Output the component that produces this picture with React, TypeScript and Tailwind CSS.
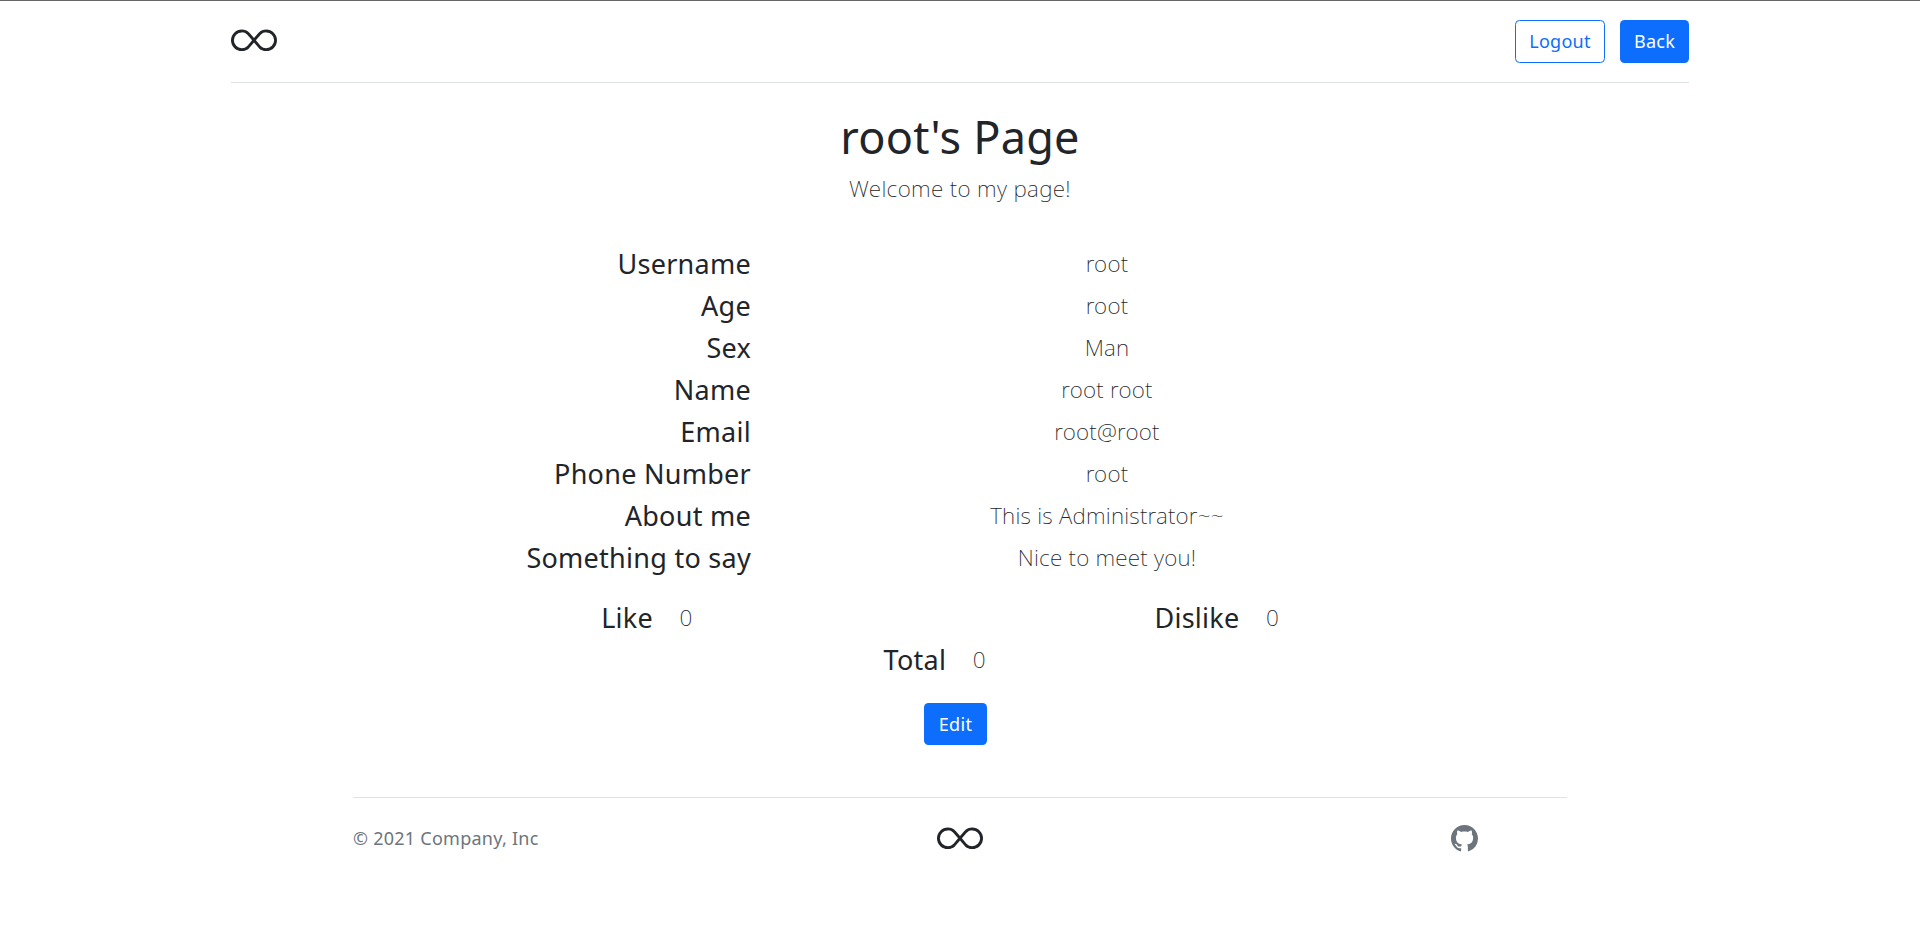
import { BsGithub, BsInfinity } from "react-icons/bs";

const rows = [
  ["Username", "root"],
  ["Age", "root"],
  ["Sex", "Man"],
  ["Name", "root root"],
  ["Email", "root@root"],
  ["Phone Number", "root"],
  ["About me", "This is Administrator~~"],
  ["Something to say", "Nice to meet you!"],
];

const scores = [
  ["Like", "0"],
  ["Dislike", "0"],
  ["Total", "0"],
];

export default function App() {
  return (
    <div className="min-h-[942px] border-t border-[#666666] bg-white font-['Noto_Sans',sans-serif] text-[#212529]">
      {/* Top nav */}
      <div className="ml-[231px] w-[1458px]">
        <header className="flex h-[82px] items-center justify-between border-b border-[#dee2e6]">
          <BsInfinity className="-mt-[2px] h-[46px] w-[46px]" />
          <div className="flex items-center gap-[15px]">
            <button className="h-[43px] w-[90px] rounded-[4.5px] border border-[#0d6efd] text-[18px] tracking-[0.015em] text-[#0d6efd]">
              Logout
            </button>
            <button className="h-[43px] w-[69px] rounded-[4.5px] bg-[#0d6efd] text-[18px] tracking-[0.015em] text-white">
              Back
            </button>
          </div>
        </header>
      </div>

      {/* Heading */}
      <div className="mt-[27px] text-center">
        <h1 className="text-[45px] leading-[54px] tracking-[0.005em]">root's Page</h1>
        <p className="mt-[8px] text-[22.5px] leading-[34px] font-[250] tracking-[0.015em]">Welcome to my page!</p>
      </div>

      {/* Profile rows */}
      <div className="mt-[41px] ml-[424px] grid w-[1026px] grid-cols-[327px_699px] gap-y-[9px]">
        {rows.map(([label, value]) => (
          <div key={label} className="contents">
            <div className="text-right text-[27px] leading-[33px] tracking-[0.01em]">{label}</div>
            <div className="pl-[13px] text-center text-[22.5px] leading-[33px] font-[250] tracking-[0.01em]">{value}</div>
          </div>
        ))}
      </div>

      {/* Like / dislike / total */}
      <div className="mx-auto mt-[27px] flex w-[1173px] flex-wrap justify-center gap-y-[9px]">
        {scores.map(([label, value]) => (
          <div key={label} className="grid w-[586.5px] grid-cols-[279.5px_66px]">
            <div className="text-right text-[27px] leading-[33px] tracking-[0.01em]">{label}</div>
            <div className="text-center text-[22.5px] leading-[33px] font-[250]">{value}</div>
          </div>
        ))}
      </div>

      <div className="mt-[27px] flex justify-center">
        <button className="mr-[9px] h-[42px] w-[63px] rounded-[4.5px] bg-[#0d6efd] text-[18px] tracking-[0.015em] text-white">
          Edit
        </button>
      </div>

      {/* Footer */}
      <footer className="mx-auto mt-[52px] grid w-[1214px] grid-cols-3 items-center border-t border-[#dee2e6] pt-[16px]">
        <p className="text-[18px] tracking-[0.014em] text-[#6c757d]">© 2021 Company, Inc</p>
        <BsInfinity className="mt-[2px] ml-[1px] h-[46px] w-[46px] justify-self-center" />
        <div className="flex justify-end pr-[89px]">
          <BsGithub className="h-[27px] w-[27px] text-[#6c757d]" />
        </div>
      </footer>
    </div>
  );
}
